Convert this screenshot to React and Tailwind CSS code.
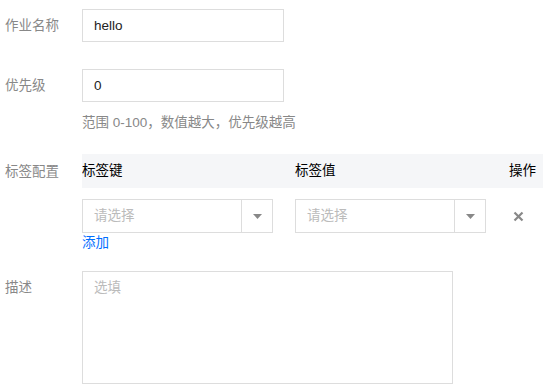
import React from 'react';

const font = { fontFamily: '"Liberation Sans", "Noto Sans CJK SC", sans-serif' };

const Label = ({ children }) => (
  <div className="w-[77px] shrink-0 h-[34px] leading-[34px] text-[#888]">{children}</div>
);

const Select = () => (
  <div className="flex w-[191px] h-[34px] border border-[#ddd] bg-white">
    <div className="flex-1 px-[11px] leading-[32px] text-[#bbb]">请选择</div>
    <div className="w-[31px] border-l border-[#ddd] flex items-center justify-center">
      <svg width="9" height="5" viewBox="0 0 9 5">
        <path d="M0 0h9L4.5 5z" fill="#888" />
      </svg>
    </div>
  </div>
);

export default function App() {
  return (
    <div className="bg-white min-h-screen pl-[5px] pt-[9px] text-[13.5px] text-[#333]" style={font}>
      <div className="flex">
        <div className="w-[77px] shrink-0 h-[33px] leading-[33px] text-[#888]">作业名称</div>
        <div className="w-[202px] h-[33px] border border-[#ddd] px-[11px] leading-[31px] text-[#222]">hello</div>
      </div>

      <div className="flex mt-[27px]">
        <div className="w-[77px] shrink-0 h-[33px] leading-[33px] text-[#888]">优先级</div>
        <div>
          <div className="w-[202px] h-[33px] border border-[#ddd] px-[11px] leading-[31px] text-[#222]">0</div>
          <div className="mt-[11px] leading-[20px] text-[#888]">范围 0-100，数值越大，优先级越高</div>
        </div>
      </div>

      <div className="flex mt-[21px]">
        <div className="w-[77px] shrink-0 h-[34px] leading-[36px] text-[#888]">标签配置</div>
        <div className="w-[461px]">
          <div className="flex h-[34px] items-center bg-[#f5f6f8] text-black">
            <div className="w-[213px]">标签键</div>
            <div className="w-[214px]">标签值</div>
            <div className="flex-1">操作</div>
          </div>
          <div className="flex items-center mt-[11px]">
            <div className="w-[213px]"><Select /></div>
            <div className="w-[214px]"><Select /></div>
            <div className="flex-1 pl-[4px] flex items-center">
              <svg width="11" height="11" viewBox="0 0 11 11">
                <path d="M1.5 1.5l8 8M9.5 1.5l-8 8" stroke="#888" strokeWidth="2.2" />
              </svg>
            </div>
          </div>
          <div className="leading-[20px] text-[#006eff]">添加</div>
        </div>
      </div>

      <div className="flex mt-[18px]">
        <Label>描述</Label>
        <div className="w-[371px] h-[113px] border border-[#ddd] px-[11px] pt-[6px] leading-[20px] text-[#bbb]">选填</div>
      </div>
    </div>
  );
}
